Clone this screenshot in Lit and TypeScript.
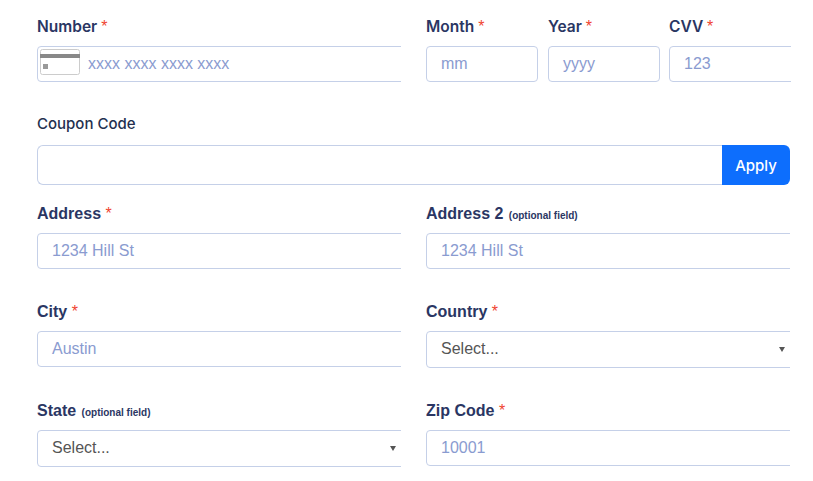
import { LitElement, html, css } from "lit";
import { customElement } from "lit/decorators.js";

@customElement("app-root")
export class AppRoot extends LitElement {
  static styles = css`
    :host { display: block; background: #fff; height: 481px; overflow: hidden; font-family: "Liberation Sans", Arial, sans-serif; }
    .form { display: flex; flex-direction: column; width: 753px; padding: 16px 0 0 37px; }
    .row { display: grid; grid-template-columns: 364px 364px; column-gap: 25px; }
    .r1 { height: 98px; }
    .r3 { height: 98px; }
    .r4 { height: 99px; }
    .r5 { height: 80px; }
    .sub { display: grid; grid-template-columns: 112px 112px 121px; column-gap: 10px; }
    .sub > :last-child { margin-left: -1px; width: 122px; }
    .field { display: flex; flex-direction: column; min-width: 0; overflow: hidden; }
    label { display: block; height: 21px; margin-bottom: 9px; font: 700 16px/22px "Liberation Sans", sans-serif; color: #2a3663; white-space: nowrap; }
    .top label { font: 600 15.5px/22px Inter, sans-serif; }
    .req { color: #f0442f; font: 400 16px "Liberation Sans", sans-serif; }
    small { font: 700 10px "Liberation Sans", sans-serif; color: #2a3663; margin-left: 1px; }
    .box { box-sizing: border-box; height: 36px; border: 1px solid #c5d0e8; border-radius: 4px; display: flex; align-items: center; padding-left: 14px; font-size: 16px; color: #8a9bd0; background: #fff; white-space: nowrap; }
    .wide { width: calc(100% + 6px); }
    .narrow { width: 112px; }
    .select { color: #555; height: 37px; padding-bottom: 2px; }
    .arrow { margin: 2px 10px 0 auto; width: 0; height: 0; border-left: 3px solid transparent; border-right: 3px solid transparent; border-top: 5px solid #555; }
    .card { padding-left: 2px; gap: 8px; }
    .card svg { display: block; flex: none; align-self: flex-start; margin-top: 2px; }
    .coupon { margin-bottom: 18px; }
    .coupon label { height: 20px; font: 500 15px/20px Inter, sans-serif; margin-bottom: 11px; color: #24304f; }
    .group { display: flex; height: 40px; }
    .group .input { flex: 1; box-sizing: border-box; border: 1px solid #c5d0e8; border-right: 0; border-radius: 6px 0 0 6px; }
    button { width: 68px; border: 0; padding: 0; background: #0d6efd; color: #fff; border-radius: 0 6px 6px 0; font: 500 15px Inter, sans-serif; }
  `;

  private req() { return html`<span class="req">*</span>`; }

  render() {
    return html`<div class="form">
      <div class="row r1 top">
        <div class="field">
          <label>Number ${this.req()}</label>
          <div class="box wide card">
            <svg width="40" height="26" viewBox="0 0 40 26"><rect x=".5" y=".5" width="39" height="25" rx="2" fill="#fff" stroke="#ccc"/><rect x="0" y="5" width="40" height="4" fill="#888"/><rect x="3" y="15" width="5" height="5" fill="#999"/></svg>
            <span>xxxx xxxx xxxx xxxx</span>
          </div>
        </div>
        <div class="sub">
          <div class="field"><label>Month ${this.req()}</label><div class="box narrow">mm</div></div>
          <div class="field"><label>Year ${this.req()}</label><div class="box narrow">yyyy</div></div>
          <div class="field"><label>CVV ${this.req()}</label><div class="box wide">123</div></div>
        </div>
      </div>
      <div class="coupon">
        <label>Coupon Code</label>
        <div class="group"><div class="input"></div><button>Apply</button></div>
      </div>
      <div class="row r3">
        <div class="field"><label>Address ${this.req()}</label><div class="box wide">1234 Hill St</div></div>
        <div class="field"><label>Address 2 <small>(optional field)</small></label><div class="box wide">1234 Hill St</div></div>
      </div>
      <div class="row r4">
        <div class="field"><label>City ${this.req()}</label><div class="box wide">Austin</div></div>
        <div class="field"><label>Country ${this.req()}</label><div class="box wide select"><span>Select...</span><i class="arrow"></i></div></div>
      </div>
      <div class="row r5">
        <div class="field"><label>State <small>(optional field)</small></label><div class="box wide select"><span>Select...</span><i class="arrow"></i></div></div>
        <div class="field"><label>Zip Code ${this.req()}</label><div class="box wide">10001</div></div>
      </div>
    </div>`;
  }
}
